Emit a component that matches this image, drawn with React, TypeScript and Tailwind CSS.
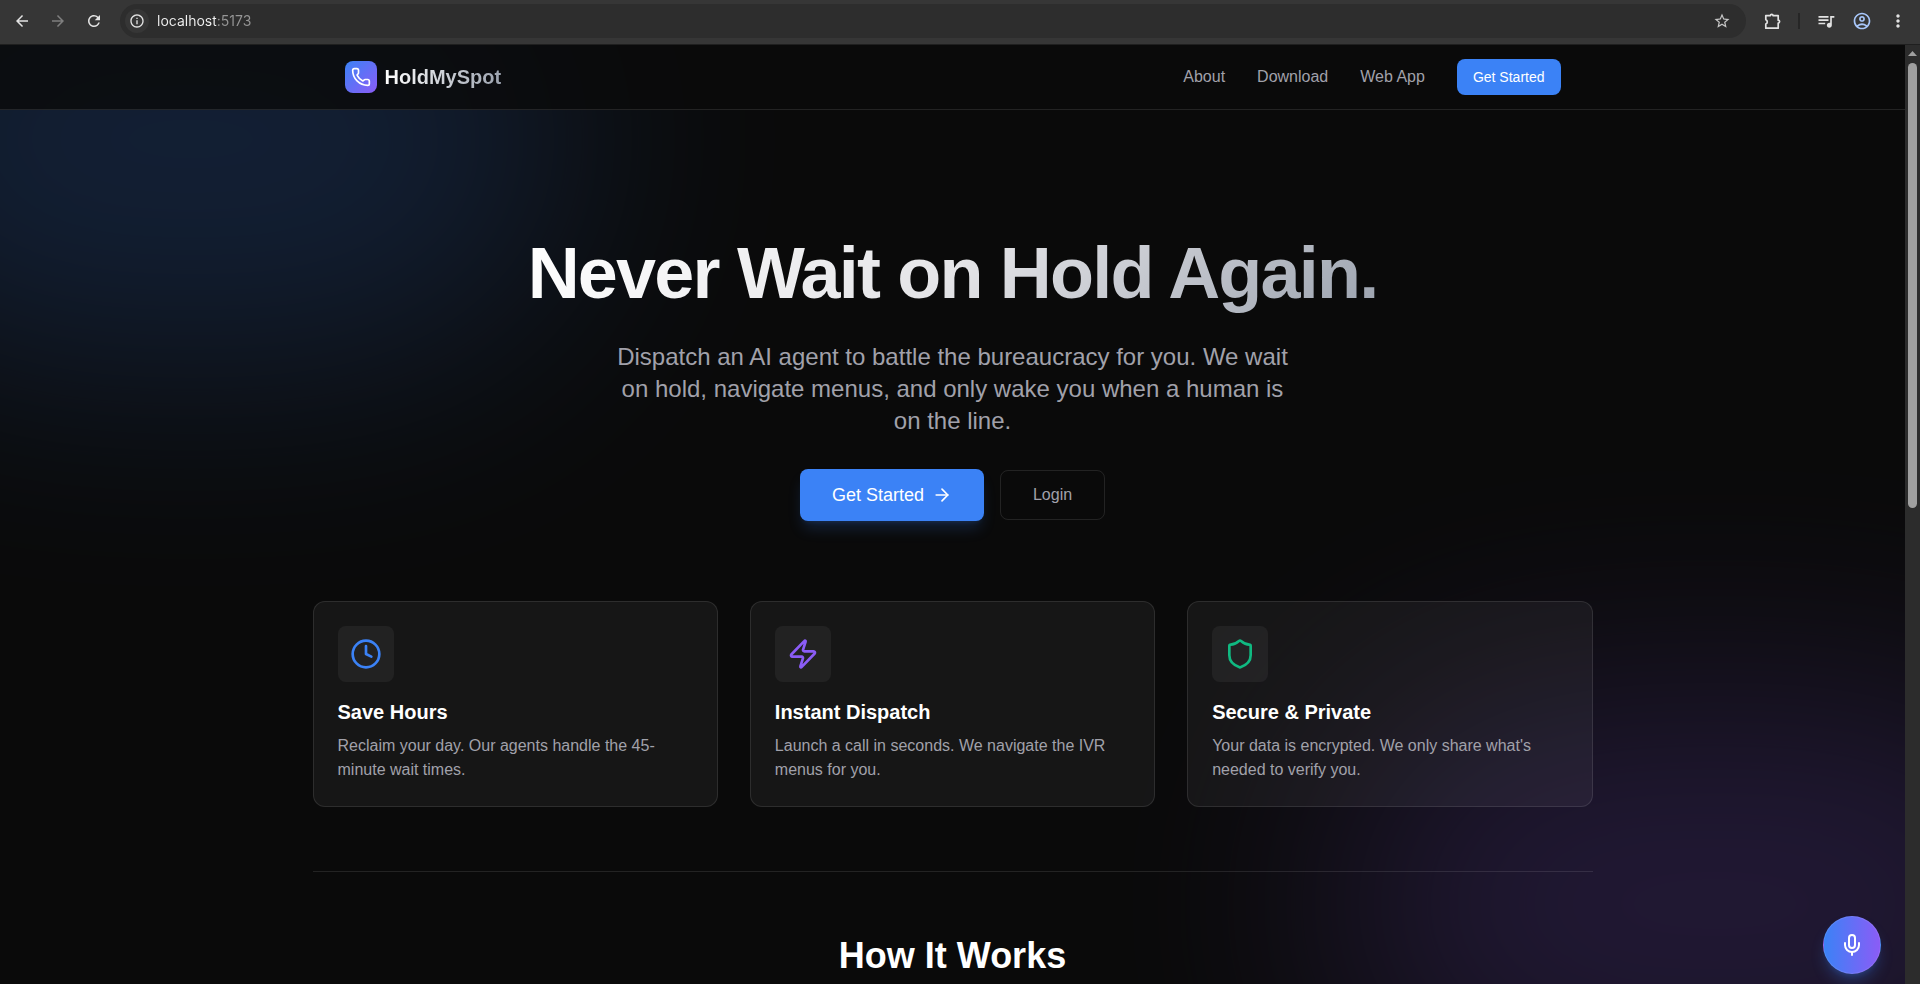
import type { ReactNode } from "react";
import { ArrowRight, Clock, Mic, Phone, Shield, Zap } from "lucide-react";
import {
  MdArrowBack,
  MdArrowForward,
  MdInfoOutline,
  MdMoreVert,
  MdOutlineAccountCircle,
  MdQueueMusic,
  MdRefresh,
  MdStarBorder,
} from "react-icons/md";

const NAV_LINKS = ["About", "Download", "Web App"];

const FEATURES = [
  {
    title: "Save Hours",
    text: "Reclaim your day. Our agents handle the 45-minute wait times.",
    icon: <Clock size={32} className="text-[#3b82f6]" />,
  },
  {
    title: "Instant Dispatch",
    text: "Launch a call in seconds. We navigate the IVR menus for you.",
    icon: <Zap size={32} className="text-[#8b5cf6]" />,
  },
  {
    title: "Secure & Private",
    text: "Your data is encrypted. We only share what's needed to verify you.",
    icon: <Shield size={32} className="text-[#10b981]" />,
  },
];

function ToolButton({ label, children }: { label: string; children: ReactNode }) {
  return (
    <button
      type="button"
      aria-label={label}
      className="flex size-9 shrink-0 items-center justify-center text-[#e3e3e3]"
    >
      {children}
    </button>
  );
}

function ExtensionIcon() {
  return (
    <svg width="18" height="18" viewBox="0 0 18 18" fill="none" stroke="currentColor" strokeWidth="1.7">
      <path
        d="M2.8 3.6h4.6a1.3 1.3 0 0 1 2.6 0h5.2v4.6a1.3 1.3 0 0 1 0 2.8v5.2H2.8v-4.1a2.3 2.3 0 0 0 0-4.3z"
        strokeLinejoin="round"
      />
    </svg>
  );
}

function BrowserBar() {
  return (
    <div className="flex h-[45px] shrink-0 items-center border-b border-[#1f1f1f] bg-[#363636] pb-0.5 pl-1 pr-1">
      <ToolButton label="Back">
        <MdArrowBack size={18} />
      </ToolButton>
      <ToolButton label="Forward">
        <MdArrowForward size={18} className="text-[#7f7f7f]" />
      </ToolButton>
      <ToolButton label="Reload">
        <MdRefresh size={18} />
      </ToolButton>
      <div className="ml-2 flex h-[34px] min-w-0 flex-1 items-center rounded-full bg-[#2d2d2d] pl-[5px] pr-[6px]">
        <button
          type="button"
          aria-label="Site information"
          className="flex size-6 items-center justify-center rounded-full bg-[#363636] text-[#e3e3e3]"
        >
          <MdInfoOutline size={16} />
        </button>
        <input
          type="text"
          aria-label="Address"
          defaultValue="localhost:5173"
          className="ml-2 min-w-0 flex-1 bg-[linear-gradient(to_right,#f1f1f1_59px,#969696_59px)] bg-clip-text font-[Inter,sans-serif] text-sm text-transparent outline-none"
        />
        <ToolButton label="Bookmark">
          <MdStarBorder size={18} className="text-[#c7c7c7]" />
        </ToolButton>
      </div>
      <div className="ml-2 flex items-center">
        <ToolButton label="Extensions">
          <ExtensionIcon />
        </ToolButton>
        <span className="mx-2 h-4 w-0.5 bg-[#262626]" />
        <ToolButton label="Media">
          <MdQueueMusic size={20} />
        </ToolButton>
        <ToolButton label="Profile">
          <MdOutlineAccountCircle size={20} className="text-[#a8c7fa]" />
        </ToolButton>
        <ToolButton label="Menu">
          <MdMoreVert size={20} />
        </ToolButton>
      </div>
    </div>
  );
}

function ScrollTrack() {
  return (
    <div className="flex w-[15px] shrink-0 flex-col items-center bg-[#2c2c2c] pt-1.5">
      <svg width="9" height="5" viewBox="0 0 9 5" fill="#9f9f9f">
        <path d="M4.5 0 9 5H0z" />
      </svg>
      <div className="mt-[7px] h-[445px] w-[9px] rounded-full bg-[#9f9f9f]" />
    </div>
  );
}

function SiteHeader() {
  return (
    <header className="relative border-b border-white/10 bg-[#0a0a0a]/80">
      <div className="mx-auto flex h-16 max-w-7xl items-center justify-between px-8">
        <div className="flex items-center gap-2">
          <div className="flex size-8 items-center justify-center rounded-lg bg-[linear-gradient(135deg,#3b82f6,#8b5cf6)]">
            <Phone size={20} className="text-white" />
          </div>
          <span className="bg-[linear-gradient(to_right,#fff,#9ca3af)] bg-clip-text text-xl font-bold text-transparent">
            HoldMySpot
          </span>
        </div>
        <nav className="flex items-center gap-8">
          {NAV_LINKS.map((link) => (
            <a key={link} href="#" className="text-[#a1a1aa]">
              {link}
            </a>
          ))}
          <button type="button" className="rounded-lg bg-[#3b82f6] px-4 py-2 text-sm text-white">
            Get Started
          </button>
        </nav>
      </div>
    </header>
  );
}

export default function App() {
  return (
    <div className="flex h-screen flex-col bg-[#0a0a0a] font-['Liberation_Sans',Arial,sans-serif]">
      <BrowserBar />
      <div className="flex min-h-0 flex-1">
        <div className="relative isolate min-w-0 flex-1 overflow-hidden">
          {/* ambient glows behind the page */}
          <div className="absolute -left-[10%] -top-[14%] -z-10 h-[48%] w-[40%] rounded-full bg-[#3b82f6] opacity-[0.18] blur-[120px]" />
          <div className="absolute -bottom-[14%] -right-[10%] -z-10 h-[45%] w-[40%] rounded-full bg-[#8b5cf6] opacity-[0.18] blur-[120px]" />

          <SiteHeader />

          <main className="mx-auto max-w-7xl pt-[123px]">
            <section className="flex flex-col items-center text-center">
              <h1 className="bg-[linear-gradient(135deg,#fff,#e4e4e7_50%,#9ca3af)] bg-clip-text text-7xl leading-[80px] font-bold tracking-tight text-transparent">
                Never Wait on Hold Again.
              </h1>
              <p className="mt-7 max-w-2xl text-2xl text-[#a1a1aa]">
                Dispatch an AI agent to battle the bureaucracy for you. We wait on hold, navigate menus, and only wake
                you when a human is on the line.
              </p>
              <div className="mt-8 flex items-center gap-4">
                <button
                  type="button"
                  className="flex items-center gap-2 rounded-lg bg-[#3b82f6] px-8 py-3 text-lg text-white shadow-lg shadow-[#3b82f6]/20"
                >
                  Get Started
                  <ArrowRight size={20} />
                </button>
                <button type="button" className="rounded-lg border border-white/10 px-8 py-3 text-[#a1a1aa]">
                  Login
                </button>
              </div>
            </section>

            <section className="mt-20 grid grid-cols-3 gap-8">
              {FEATURES.map((feature) => (
                <article key={feature.title} className="rounded-xl border border-white/10 bg-white/5 p-6">
                  <div className="mb-4 flex size-14 items-center justify-center rounded-lg bg-white/5">
                    {feature.icon}
                  </div>
                  <h2 className="mb-2 text-xl font-bold text-white">{feature.title}</h2>
                  <p className="text-[#a1a1aa]">{feature.text}</p>
                </article>
              ))}
            </section>

            <section className="mt-16 border-t border-white/10 pt-16">
              <h2 className="text-center text-4xl font-bold text-white">How It Works</h2>
            </section>
          </main>

          <button
            type="button"
            aria-label="Start voice assistant"
            className="absolute right-6 bottom-2.5 flex size-[58px] items-center justify-center rounded-full border border-white/10 bg-[linear-gradient(to_right,#3b82f6,#8b5cf6)] text-white shadow-lg shadow-[#3b82f6]/30"
          >
            <Mic size={24} />
          </button>
        </div>
        <ScrollTrack />
      </div>
    </div>
  );
}
